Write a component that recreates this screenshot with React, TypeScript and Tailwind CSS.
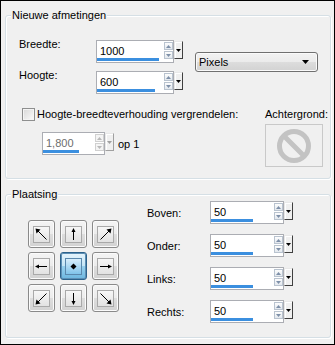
import React from "react";

const font = "font-['Liberation_Sans',Arial,sans-serif]";

type Dir = "nw" | "n" | "ne" | "w" | "c" | "e" | "sw" | "s" | "se";

const arrows: Record<Dir, { line?: string; head: string }> = {
    nw: { line: "M12.5 12.5 L3 3", head: "1.5,1.5 6.5,2.5 2.5,6.5" },
    n: { line: "M7.5 13 L7.5 4", head: "7.5,1 5.5,5 9.5,5" },
    ne: { line: "M2.5 12.5 L12 3", head: "13.5,1.5 8.5,2.5 12.5,6.5" },
    w: { line: "M13 7.5 L4 7.5", head: "1,7.5 5,5.5 5,9.5" },
    c: { head: "7.5,4.5 10.5,7.5 7.5,10.5 4.5,7.5" },
    e: { line: "M2 7.5 L11 7.5", head: "14,7.5 10,5.5 10,9.5" },
    sw: { line: "M12.5 2.5 L3 12", head: "1.5,13.5 2.5,8.5 6.5,12.5" },
    s: { line: "M7.5 2 L7.5 11", head: "7.5,14 5.5,10 9.5,10" },
    se: { line: "M2.5 2.5 L12 12", head: "13.5,13.5 12.5,8.5 8.5,12.5" },
};

const DirButton = ({ dir }: { dir: Dir }) => {
    const selected = dir === "c";
    const a = arrows[dir];
    return (
        <div
            className={`flex items-center justify-center w-[27px] h-[28px] rounded-[3px] border ${
                selected
                    ? "border-[#2c628b] bg-[linear-gradient(#e5f4fc_0%,#c4e5f6_50%,#98d1ef_50%,#6cb6df_100%)] shadow-[inset_0_0_0_1px_#5d8fb5]"
                    : "border-[#8a8a8a] bg-[linear-gradient(#f4f4f4_0%,#ececec_50%,#dedede_50%,#d2d2d2_100%)] shadow-[inset_0_0_0_1px_#fbfbfb]"
            }`}
        >
            <div
                className={`w-[17px] h-[17px] border ${
                    selected
                        ? "border-[#5a88ad] bg-linear-to-b from-[#d8eefb] to-[#7fc3ea]"
                        : "border-[#a9a9a9] bg-linear-to-b from-[#f7f7f7] to-[#e2e2e2]"
                }`}
            >
                <svg width="15" height="15" viewBox="0 0 15 15">
                    {a.line && <path d={a.line} stroke="#000" strokeWidth="1" fill="none" />}
                    <polygon points={a.head} fill="#000" />
                </svg>
            </div>
        </div>
    );
};

const SpinBox = ({
    value,
    boxClass,
    barClass,
    disabled = false,
}: {
    value: string;
    boxClass: string;
    barClass: string;
    disabled?: boolean;
}) => {
    const arrowFill = disabled ? "#b8b8b8" : "#7d8fa8";
    const arrowBox = disabled
        ? "border-[#d0d0d0] bg-[#f4f4f4]"
        : "border-[#b9c3cf] bg-linear-to-b from-[#fdfdfd] to-[#e3e8ee]";
    return (
        <div className="flex items-start">
            <div className={`relative h-[23px] border border-[#abadb3] bg-white pl-[3px] pt-[3px] ${boxClass}`}>
                <span className={`leading-[14px] ${disabled ? "text-[#6d6d6d]" : "text-black"}`}>{value}</span>
                <div className={`absolute left-0 bottom-[1px] h-[3px] bg-[#3b8fdf] ${barClass}`} />
                <div className="absolute right-0 top-[1px] flex flex-col gap-[1px]">
                    <div className={`w-[9px] h-[8px] border flex items-center justify-center ${arrowBox}`}>
                        <svg width="5" height="3" viewBox="0 0 5 3">
                            <polygon points="2.5,0 5,3 0,3" fill={arrowFill} />
                        </svg>
                    </div>
                    <div className={`w-[9px] h-[8px] border flex items-center justify-center ${arrowBox}`}>
                        <svg width="5" height="3" viewBox="0 0 5 3">
                            <polygon points="0,0 5,0 2.5,3" fill={arrowFill} />
                        </svg>
                    </div>
                </div>
            </div>
            <div
                className={`mt-[1px] w-[9px] h-[18px] flex items-center justify-center border border-t-[#e8e8e8] border-l-[#e8e8e8] bg-[#f0f0f0] shadow-[inset_1px_1px_0_#fff] ${
                    disabled ? "border-r-[#a0a0a0] border-b-[#a0a0a0]" : "border-r-[#404040] border-b-[#404040]"
                }`}
            >
                <svg width="5" height="3" viewBox="0 0 5 3">
                    <polygon points="0,0 5,0 2.5,3" fill={disabled ? "#a0a0a0" : "#000"} />
                </svg>
            </div>
        </div>
    );
};

const GroupBox = ({
    title,
    className,
    children,
}: {
    title: string;
    className: string;
    children: React.ReactNode;
}) => (
    <div
        className={`relative w-[326px] border border-[#d5dfe5] rounded-[3px] shadow-[inset_1px_1px_0_#fff,1px_1px_0_#fff] ${className}`}
    >
        <span className="absolute left-[5px] top-[-8px] px-[1px] bg-[#f0f0f0] leading-[14px]">{title}</span>
        {children}
    </div>
);

const App = () => {
    const margins = ["Boven:", "Onder:", "Links:", "Rechts:"];
    const dirs: Dir[] = ["nw", "n", "ne", "w", "c", "e", "sw", "s", "se"];

    return (
        <div
            className={`${font} w-[335px] h-[345px] bg-[#f0f0f0] border border-black text-[11px] leading-[14px] text-black pl-[4px] overflow-hidden`}
        >
            <GroupBox title="Nieuwe afmetingen" className="mt-[14px] h-[164px]">
                <div className="pt-[21px] pl-[13px] flex items-start">
                    <div className="flex flex-col gap-[5px]">
                        <div className="flex items-start">
                            <span className="w-[77px]">Breedte:</span>
                            <div className="mt-[3px]">
                                <SpinBox value="1000" boxClass="w-[78px]" barClass="w-[62px]" />
                            </div>
                        </div>
                        <div className="flex items-start">
                            <span className="w-[77px]">Hoogte:</span>
                            <div className="mt-[3px]">
                                <SpinBox value="600" boxClass="w-[78px]" barClass="w-[58px]" />
                            </div>
                        </div>
                    </div>
                    <div className="ml-[12px] mt-[15px] flex items-center justify-between w-[123px] h-[20px] rounded-[3px] border border-[#707070] bg-[linear-gradient(#f2f2f2_0%,#ebebeb_50%,#dddddd_50%,#d2d2d2_100%)] shadow-[inset_0_0_0_1px_#fafafa] pl-[3px] pr-[8px]">
                        <span>Pixels</span>
                        <svg width="7" height="4" viewBox="0 0 7 4">
                            <polygon points="0,0 7,0 3.5,4" fill="#000" />
                        </svg>
                    </div>
                </div>

                <div className="mt-[13px] pl-[16px] flex items-start">
                    <div className="w-[243px]">
                        <label className="flex items-center gap-[2px] h-[14px]">
                            <span className="w-[13px] h-[13px] border border-[#8e8f8f] bg-linear-to-br from-[#d8d8d8] to-[#fbfbfb] shadow-[inset_0_0_0_1px_#f4f4f4]" />
                            <span>Hoogte-breedteverhouding vergrendelen:</span>
                        </label>
                        <div className="mt-[11px] ml-[20px] flex items-center">
                            <SpinBox value="1,800" boxClass="w-[63px]" barClass="w-[36px]" disabled />
                            <span className="ml-[4px]">op 1</span>
                        </div>
                    </div>
                    <div>
                        <div>Achtergrond:</div>
                        <div className="mt-[3px] w-[58px] h-[43px] border border-[#c9c9c9] bg-[#f0f0f0] flex items-center justify-center">
                            <svg width="36" height="36" viewBox="0 0 36 36">
                                <circle cx="18" cy="18" r="14.5" stroke="#c3c3c3" strokeWidth="5" fill="none" />
                                <path d="M8 8 L28 28" stroke="#c3c3c3" strokeWidth="5" />
                            </svg>
                        </div>
                    </div>
                </div>
            </GroupBox>

            <GroupBox title="Plaatsing" className="mt-[15px] h-[144px]">
                <div className="pl-[22px] flex items-start">
                    <div className="mt-[25px] grid grid-cols-[repeat(3,27px)] gap-x-[5px] gap-y-[4px]">
                        {dirs.map((d) => (
                            <DirButton key={d} dir={d} />
                        ))}
                    </div>
                    <div className="ml-[28px] mt-[6px] flex flex-col gap-[10px]">
                        {margins.map((m) => (
                            <div key={m} className="flex items-center h-[23px]">
                                <span className="w-[63px]">{m}</span>
                                <SpinBox value="50" boxClass="w-[74px]" barClass="w-[42px]" />
                            </div>
                        ))}
                    </div>
                </div>
            </GroupBox>
        </div>
    );
};

export default App;
